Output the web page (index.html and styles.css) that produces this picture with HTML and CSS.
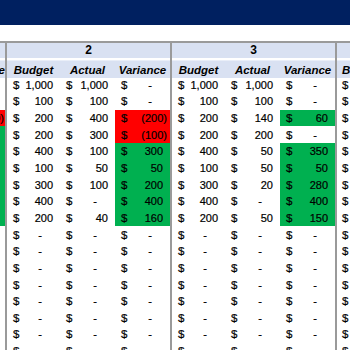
FILE: index.html
```html
<!DOCTYPE html>
<html>
<head>
<meta charset="utf-8">
<link rel="stylesheet" href="styles.css">
</head>
<body>
<div class="topbar"></div>
<div class="band"></div>
<div class="sheet" id="sheet"></div>
<script src="app.js"></script>
</body>
</html>
```
FILE: styles.css
```css
html, body {
  margin: 0;
  padding: 0;
  background: #ffffff;
  width: 350px;
  height: 350px;
  overflow: hidden;
}
body {
  font-family: "Liberation Sans", Arial, sans-serif;
  font-size: 11px;
  color: #000000;
}
.topbar {
  height: 25px;
  background: #002060;
}
.band {
  height: 16px;
  background: #ffffff;
}
.sheet {
  display: flex;
  margin-left: -50px;
  border-top: 2px solid #9a9a9a;
  overflow: hidden;
}
.group {
  flex: none;
  display: grid;
  grid-template-columns: 53px 55px 55px;
  grid-auto-rows: 16.667px;
  border-left: 2px solid #9a9a9a;
}
.group.first {
  grid-template-columns: 55px;
  border-left: none;
}
.group.last {
  grid-template-columns: 20px;
  overflow: hidden;
}
.gh {
  grid-column: 1 / -1;
  height: 15px;
  background: #d9e1f2;
  font-weight: bold;
  text-align: center;
  line-height: 15px;
  font-size: 12px;
}
.hc {
  height: 18px;
  background: #d9e1f2;
  font-weight: bold;
  font-style: italic;
  text-align: center;
  line-height: 19px;
  font-size: 11.5px;
  border-top: 1px solid #e9eef8;
  box-sizing: border-box;
  white-space: nowrap;
}
.group.first .hc {
  text-align: right;
  padding-right: 0;
}
.group.last .hc {
  text-align: left;
  padding-left: 5px;
}
.c {
  display: flex;
  justify-content: space-between;
  align-items: center;
  padding: 0 3px 0 6px;
  white-space: nowrap;
  color: #000000;
  -webkit-text-stroke: 0.2px #000000;
}
.cur {
  font-size: 11.5px;
}
.group.first .c {
  padding-right: 1px;
}
.group.last .c {
  justify-content: flex-start;
  padding: 0 0 0 5px;
}
.v {
  padding-right: 4px;
}
.v.neg {
  padding-right: 0;
}
.v.dash {
  padding-right: 15px;
}
.red {
  background: #ff0000;
}
.green {
  background: #00b050;
}
```
FILE: app.js
```js
var groups = [
  {
    n: "",
    cls: "first",
    cols: ["Variance"],
    pick: [2],
    rows: [
      ["", "", "-"],
      ["", "", "-"],
      ["", "", "(200)", "red"],
      ["", "", "100", "green"],
      ["", "", "300", "green"],
      ["", "", "50", "green"],
      ["", "", "200", "green"],
      ["", "", "400", "green"],
      ["", "", "160", "green"]
    ]
  },
  {
    n: "2",
    cols: ["Budget", "Actual", "Variance"],
    pick: [0, 1, 2],
    rows: [
      ["1,000", "1,000", "-"],
      ["100", "100", "-"],
      ["200", "400", "(200)", "red"],
      ["200", "300", "(100)", "red"],
      ["400", "100", "300", "green"],
      ["100", "50", "50", "green"],
      ["300", "100", "200", "green"],
      ["400", "-", "400", "green"],
      ["200", "40", "160", "green"]
    ]
  },
  {
    n: "3",
    cols: ["Budget", "Actual", "Variance"],
    pick: [0, 1, 2],
    rows: [
      ["1,000", "1,000", "-"],
      ["100", "100", "-"],
      ["200", "140", "60", "green"],
      ["200", "200", "-"],
      ["400", "50", "350", "green"],
      ["100", "50", "50", "green"],
      ["300", "20", "280", "green"],
      ["400", "-", "400", "green"],
      ["200", "50", "150", "green"]
    ]
  },
  {
    n: "",
    cls: "last",
    cols: ["B"],
    pick: [0],
    rows: []
  }
];

function cell(val, cls, last) {
  var d = document.createElement("div");
  d.className = "c" + (cls ? " " + cls : "");
  var cur = document.createElement("span");
  cur.className = "cur";
  cur.textContent = "$";
  d.appendChild(cur);
  if (!last) {
    var v = document.createElement("span");
    v.className = "v" + (val === "-" ? " dash" : "") + (val.charAt(0) === "(" ? " neg" : "");
    v.textContent = val;
    d.appendChild(v);
  }
  return d;
}

var sheet = document.getElementById("sheet");
groups.forEach(function (g) {
  var el = document.createElement("div");
  el.className = "group" + (g.cls ? " " + g.cls : "");
  var gh = document.createElement("div");
  gh.className = "gh";
  gh.textContent = g.n;
  el.appendChild(gh);
  g.cols.forEach(function (h) {
    var hc = document.createElement("div");
    hc.className = "hc";
    hc.textContent = h;
    el.appendChild(hc);
  });
  var rows = g.rows.slice();
  while (rows.length < 17) rows.push(["-", "-", "-"]);
  rows.forEach(function (r) {
    g.pick.forEach(function (i) {
      el.appendChild(cell(r[i], i === 2 ? r[3] : null, g.cls === "last"));
    });
  });
  sheet.appendChild(el);
});
```
